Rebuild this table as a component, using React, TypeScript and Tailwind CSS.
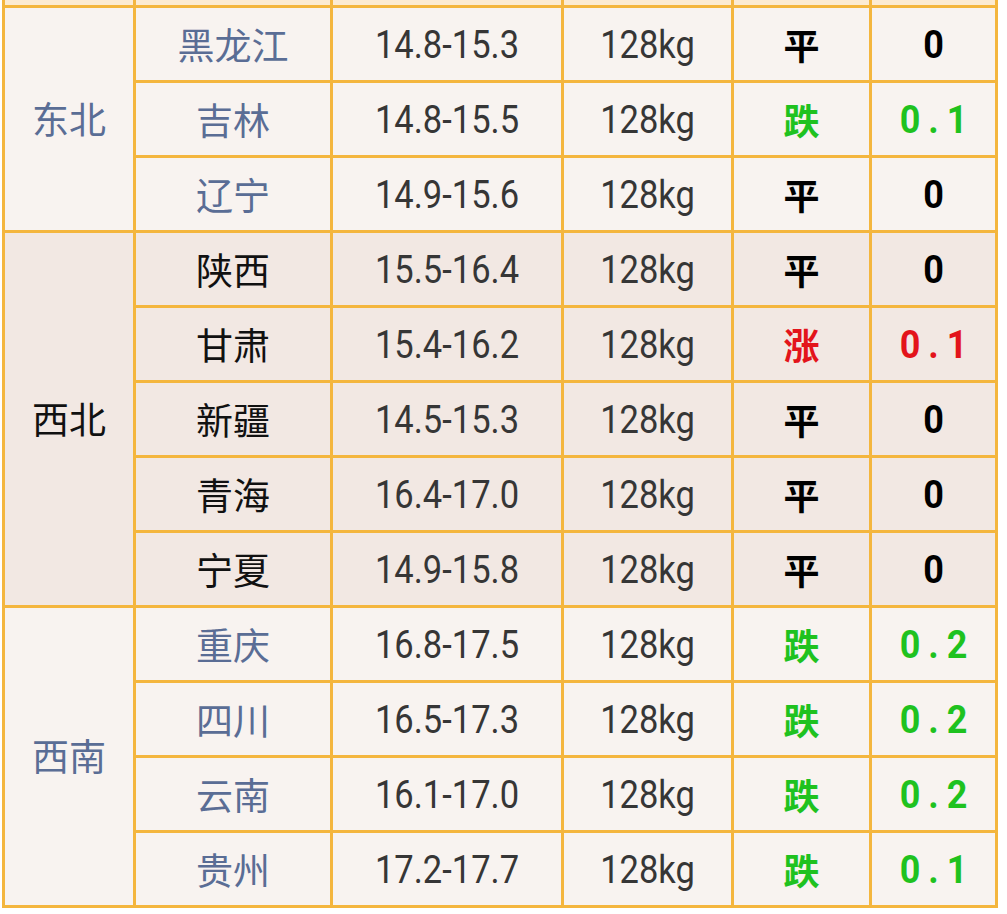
import React from "react";

type Row = {
  province: string;
  range: string;
  trend: "平" | "跌" | "涨";
  change: string;
};

type Region = {
  name: string;
  shade: "light" | "dark";
  tone: "blue" | "black";
  rows: Row[];
};

const regions: Region[] = [
  {
    name: "东北",
    shade: "light",
    tone: "blue",
    rows: [
      { province: "黑龙江", range: "14.8-15.3", trend: "平", change: "0" },
      { province: "吉林", range: "14.8-15.5", trend: "跌", change: "0.1" },
      { province: "辽宁", range: "14.9-15.6", trend: "平", change: "0" },
    ],
  },
  {
    name: "西北",
    shade: "dark",
    tone: "black",
    rows: [
      { province: "陕西", range: "15.5-16.4", trend: "平", change: "0" },
      { province: "甘肃", range: "15.4-16.2", trend: "涨", change: "0.1" },
      { province: "新疆", range: "14.5-15.3", trend: "平", change: "0" },
      { province: "青海", range: "16.4-17.0", trend: "平", change: "0" },
      { province: "宁夏", range: "14.9-15.8", trend: "平", change: "0" },
    ],
  },
  {
    name: "西南",
    shade: "light",
    tone: "blue",
    rows: [
      { province: "重庆", range: "16.8-17.5", trend: "跌", change: "0.2" },
      { province: "四川", range: "16.5-17.3", trend: "跌", change: "0.2" },
      { province: "云南", range: "16.1-17.0", trend: "跌", change: "0.2" },
      { province: "贵州", range: "17.2-17.7", trend: "跌", change: "0.1" },
    ],
  },
];

const cell = "border-[3px] border-[#f4b63e] p-0 text-center align-middle";
const cjk = "font-['Noto_Sans_CJK_SC',sans-serif]";
const num = "font-['Roboto','Noto_Sans_CJK_SC',sans-serif]";

function trendColor(trend: Row["trend"]) {
  if (trend === "跌") return "text-[#1fc21f]";
  if (trend === "涨") return "text-[#e3141b]";
  return "text-black";
}

export default function App() {
  return (
    <div className="w-[1007px] h-[914px] bg-white overflow-hidden">
      <table className="table-fixed border-collapse w-[993px] ml-[2px] -mt-[1px]">
        <colgroup>
          <col className="w-[131px]" />
          <col className="w-[197px]" />
          <col className="w-[231px]" />
          <col className="w-[170px]" />
          <col className="w-[138px]" />
          <col className="w-[126px]" />
        </colgroup>
        <tbody>
          <tr className="h-[7px] bg-[#fcebd2]">
            {Array.from({ length: 6 }).map((_, i) => (
              <td key={i} className={`${cell} border-t-0`} />
            ))}
          </tr>
          {regions.map((region) =>
            region.rows.map((row, i) => {
              const bg = region.shade === "light" ? "bg-[#f8f3f0]" : "bg-[#f2e8e3]";
              const nameColor = region.tone === "blue" ? "text-[#5a6d95]" : "text-[#111]";
              return (
                <tr key={row.province} className={`h-[75px] ${bg}`}>
                  {i === 0 && (
                    <td rowSpan={region.rows.length} className={`${cell} ${cjk} ${nameColor} text-[37px]`}>
                      {region.name}
                    </td>
                  )}
                  <td className={`${cell} ${cjk} ${nameColor} text-[37px]`}>
                    <span className="inline-block translate-y-[1px]">{row.province}</span>
                  </td>
                  <td className={`${cell} ${num} text-[34.5px] text-[#363636]`}>
                    <span className="inline-block scale-y-[1.1] translate-y-[2px]">{row.range}</span>
                  </td>
                  <td className={`${cell} ${num} text-[34.5px] text-[#363636]`}>
                    <span className="inline-block scale-y-[1.1] translate-y-[2px]">128kg</span>
                  </td>
                  <td className={`${cell} ${cjk} text-[36px] font-bold ${trendColor(row.trend)}`}>
                    {row.trend}
                  </td>
                  <td
                    className={`${cell} ${num} text-[36px] font-bold ${trendColor(row.trend)} ${
                      row.change === "0" ? "" : "tracking-[8px] pl-[8px]"
                    }`}
                  >
                    <span className="inline-block scale-y-[1.06] translate-y-[1px]">{row.change}</span>
                  </td>
                </tr>
              );
            })
          )}
        </tbody>
      </table>
    </div>
  );
}
